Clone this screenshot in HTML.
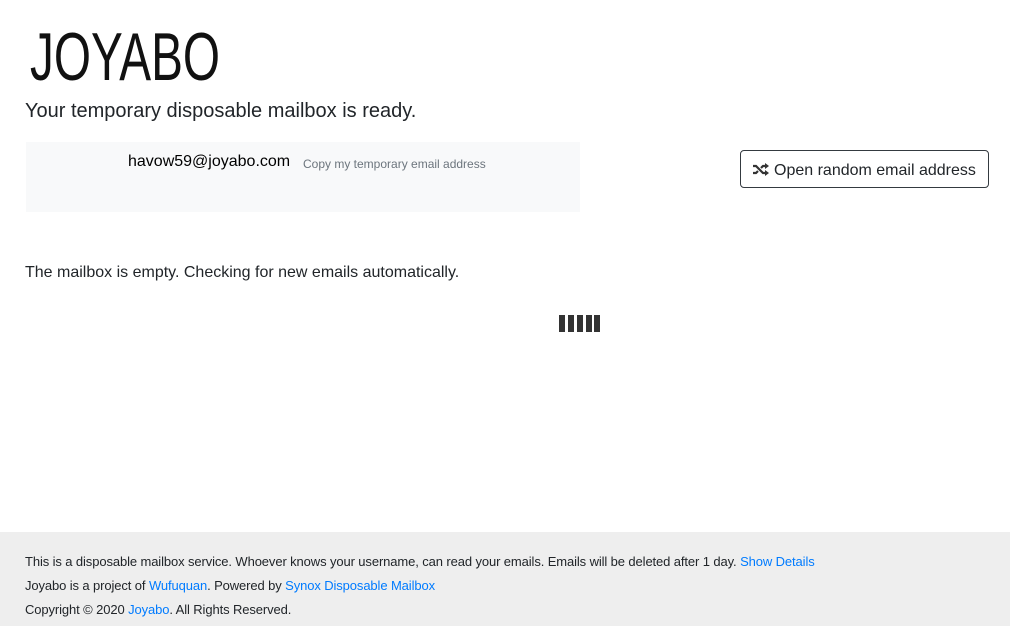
<!DOCTYPE html>
<html><head><meta charset="utf-8"><style>
body{margin:0;width:1010px;height:626px;position:relative;font-family:"Liberation Sans",sans-serif;color:#212529;background:#fff;overflow:hidden}
.abs{position:absolute}
a{color:#007bff;text-decoration:none}
.bar{position:absolute;top:315px;width:6px;height:17px;background:#333}
</style></head><body>
<svg class="abs" style="left:26px;top:20px" width="200" height="66"><text x="4" y="60" font-family="Liberation Sans" font-size="68" textLength="190" lengthAdjust="spacingAndGlyphs" fill="#111">JOYABO</text></svg>
<div class="abs" style="left:25px;top:100px;font-size:20px">Your temporary disposable mailbox is ready.</div>
<div class="abs" style="left:26px;top:142px;width:554px;height:70px;background:#f8f9fa"></div>
<div class="abs" style="left:128px;top:153px;font-size:16px;color:#000">havow59@joyabo.com</div>
<div class="abs" style="left:303px;top:157px;font-size:12px;color:#6c757d">Copy my temporary email address</div>
<div class="abs" style="left:740px;top:150px;width:247px;height:36px;border:1px solid #343a40;border-radius:4px;font-size:16px;line-height:36px;box-sizing:content-box">
<svg class="abs" style="left:12px;top:12px" width="16" height="13" viewBox="0 0 16 13"><path d="M0 3h3l7 7h3M0 10h3l2-2M8 5l2-2h3" fill="none" stroke="#333" stroke-width="2.2"/><path d="M12 0l4 3-4 3zM12 7l4 3-4 3z" fill="#333"/></svg>
<span class="abs" style="left:33px;top:2px">Open random email address</span></div>
<div class="abs" style="left:25px;top:264px;font-size:16px">The mailbox is empty. Checking for new emails automatically.</div>
<div class="bar" style="left:559px"></div><div class="bar" style="left:568px"></div><div class="bar" style="left:577px"></div><div class="bar" style="left:586px"></div><div class="bar" style="left:594px"></div>
<div class="abs" style="left:0;top:532px;width:1010px;height:94px;background:#eee;font-size:13px;letter-spacing:-0.11px">
<div class="abs" style="left:25px;top:22px">This is a disposable mailbox service. Whoever knows your username, can read your emails. Emails will be deleted after 1 day. <a>Show Details</a></div>
<div class="abs" style="left:25px;top:46px">Joyabo is a project of <a>Wufuquan</a>. Powered by <a>Synox Disposable Mailbox</a></div>
<div class="abs" style="left:25px;top:70px">Copyright © 2020 <a>Joyabo</a>. All Rights Reserved.</div>
</div>
</body></html>
